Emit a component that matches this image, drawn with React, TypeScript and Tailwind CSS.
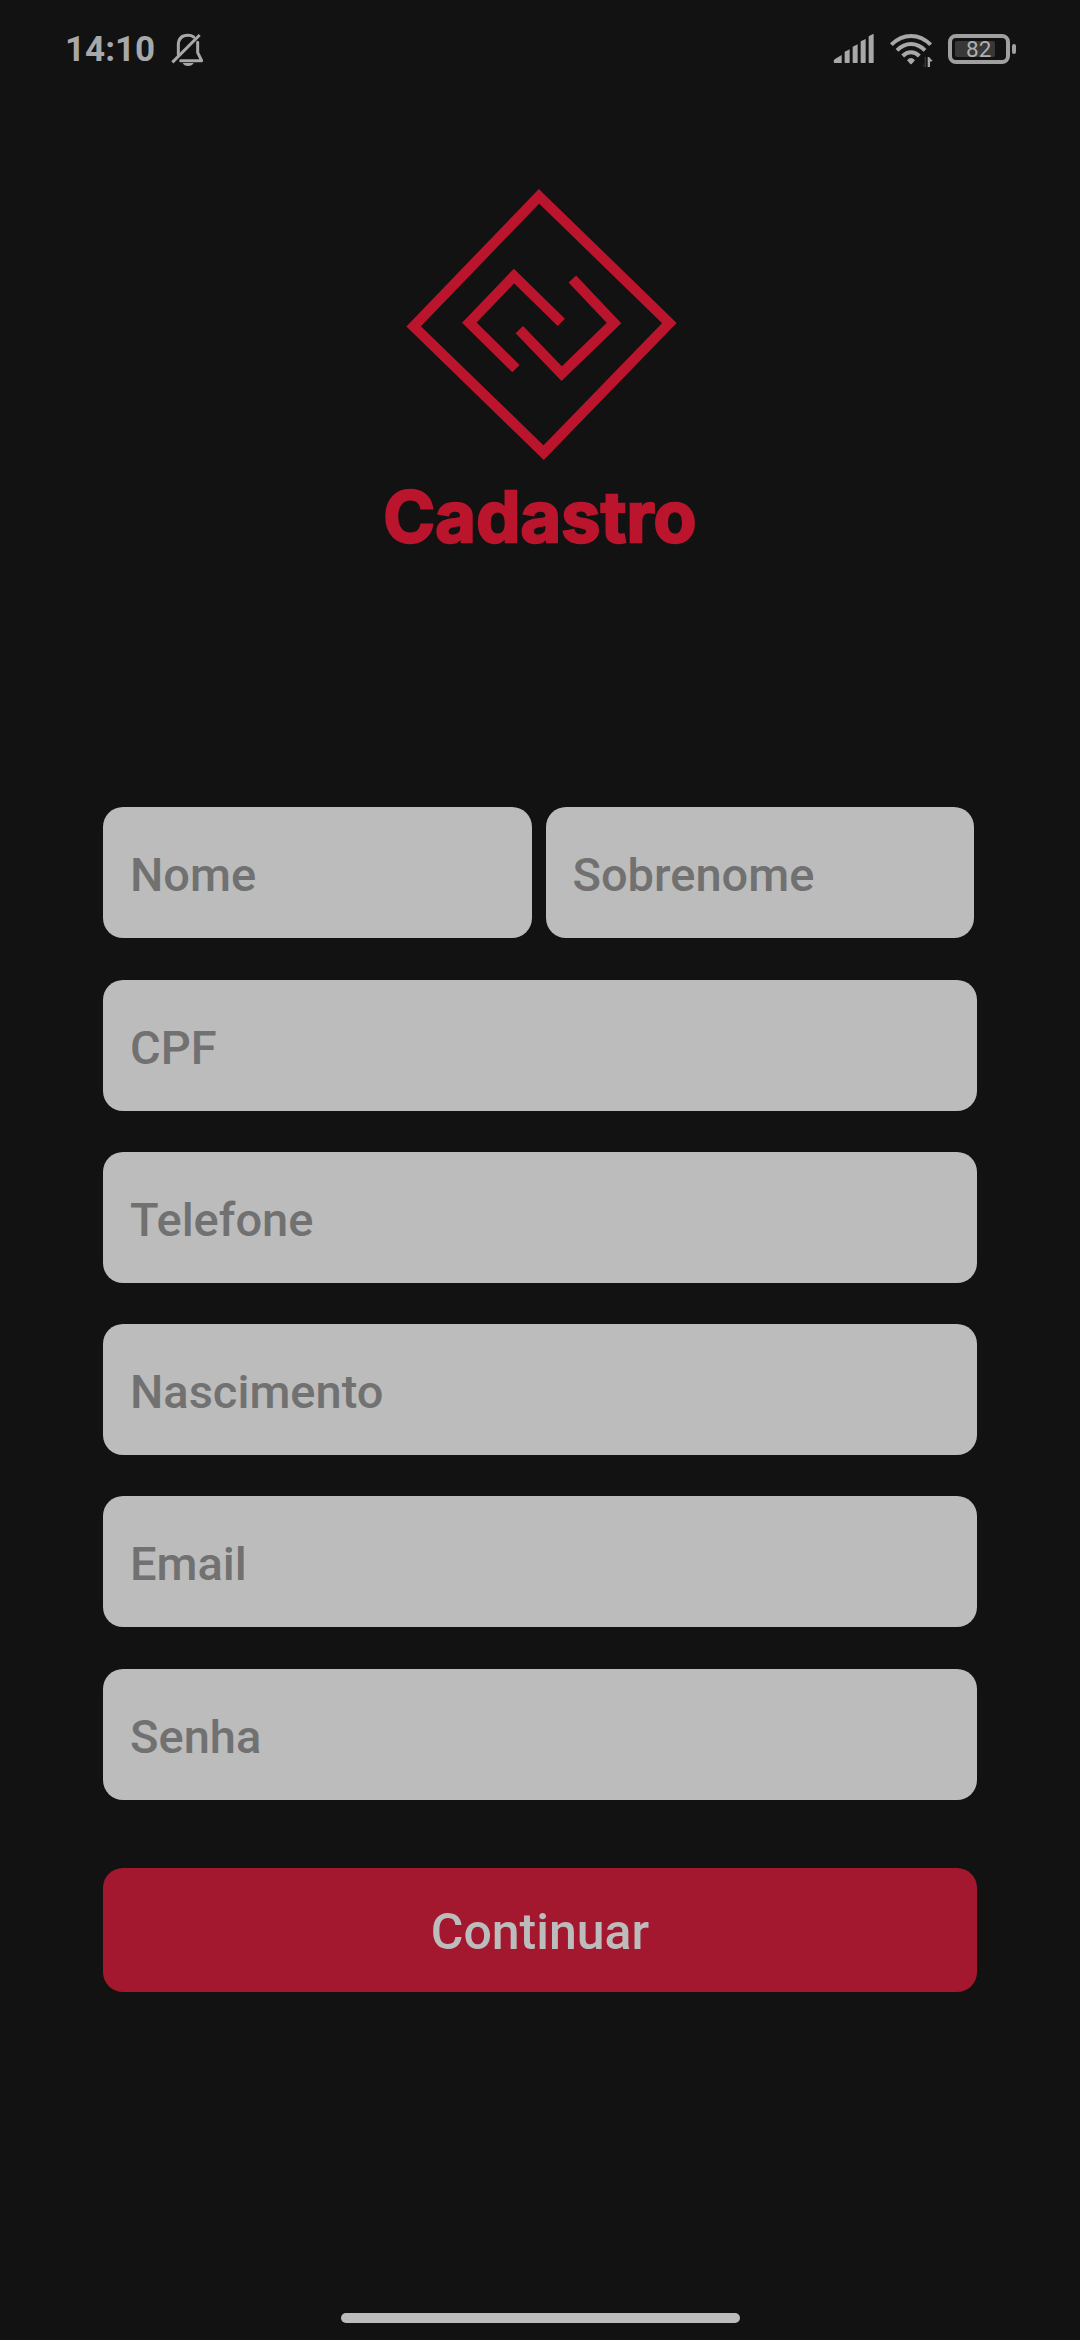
import React from "react";

function BellOff() {
  return (
    <svg className="block h-[60px] w-[50px]" viewBox="360 0 150 180" fill="none" stroke="#a8a8a8" strokeWidth="9">
      <path d="M385 104V76C385 54 398 46 414 46C421 46 427 48 431 51M443 67V98L455 122H392" strokeLinejoin="round" strokeLinecap="round" />
      <path d="M367 127L449 45" strokeLinecap="butt" />
      <path d="M398 129H431C428 135 422 138 414 138S401 135 398 129Z" fill="#a8a8a8" stroke="none" />
    </svg>
  );
}

function Signal() {
  return (
    <svg className="block h-[60px] w-[42px]" viewBox="40 0 126 180" fill="#a8a8a8">
      <path d="M42 124Q42 120 46 117L66 105V129H46Q42 129 42 125Z" />
      <path d="M75 95L90 88V127Q90 129 88 129H77Q75 129 75 127Z" />
      <path d="M99 80L114 73V127Q114 129 112 129H101Q99 129 99 127Z" />
      <path d="M123 64L138 57V127Q138 129 136 129H125Q123 129 123 127Z" />
      <path d="M147 49L160 42Q162 41 162 44V127Q162 129 160 129H149Q147 129 147 127Z" />
    </svg>
  );
}

function Wifi() {
  return (
    <svg className="block h-[60px] w-[46px]" viewBox="207 0 138 180" fill="none" stroke="#a8a8a8" strokeWidth="12">
      <path d="M214 74C249 39 297 39 332 74" />
      <path d="M231 91C257 66 289 66 315 91" />
      <path d="M248 108C263 93 283 93 298 108" />
      <path d="M261 121Q273 107 285 121L275 132Q273 134 271 132Z" fill="#a8a8a8" stroke="none" />
      <path d="M303 127L314 139V111H318V141H313Z" fill="#3a3a3a" stroke="none" />
      <path d="M323 111H327L338 123L330 125V141H323Z" fill="#a8a8a8" stroke="none" />
    </svg>
  );
}

function Battery() {
  return (
    <div className="flex items-center">
      <div className="flex h-[30px] w-[62px] items-center rounded-[8px] border-4 border-[#a0a0a0] pl-[3px]">
        <div className="relative h-4 w-10 rounded-[2px] bg-[#383838]">
          <span className="absolute -top-[3px] left-[11px] text-[22.5px] leading-[22px] text-[#b0b0b0]">82</span>
        </div>
      </div>
      <div className="ml-[2px] h-[10px] w-1 rounded-[2px] bg-[#a0a0a0]" />
    </div>
  );
}

function Logo() {
  return (
    <svg className="block h-[290px] w-[300px]" viewBox="0 0 900 870" fill="none" stroke="#bb152d" strokeWidth="31">
      <path d="M447 49L838 429L461 818L71 439Z" />
      <path d="M514 427L372 288L238 428L378 566" />
      <path d="M547 297L672 429L515 581L388 449" />
    </svg>
  );
}

function Field({ label }: { label: string }) {
  return (
    <label className="flex h-[131px] flex-1 items-center rounded-[20px] bg-[#bcbcbc] px-[27px] pt-[6px] text-[47px] font-medium text-[#717171]">
      <span>{label}</span>
    </label>
  );
}

export default function App() {
  return (
    <div className="flex h-[2340px] w-[1080px] flex-col bg-[#121212] font-[Roboto,sans-serif]">
      <header className="flex h-[100px] items-start pt-5">
        <span className="ml-[65px] w-[105px] pt-[10px] text-[35px] font-bold leading-[40px] text-[#a8a8a8]">14:10</span>
        <BellOff />
        <div className="ml-auto mr-[64px] flex">
          <Signal />
          <div className="ml-[14px]"><Wifi /></div>
          <div className="ml-[13px] mt-[14px]"><Battery /></div>
        </div>
      </header>
      <main className="flex flex-1 flex-col px-[103px]">
        <div className="flex h-[707px] flex-col items-center pt-20">
          <Logo />
          <h1 className="mt-[2px] whitespace-nowrap font-[Inter,sans-serif] text-[70px] font-bold leading-[90px] tracking-[0.2px] text-[#bb152d] [-webkit-text-stroke:2.4px_#bb152d]">Cadastro</h1>
        </div>
        <form className="flex flex-col">
          <div className="mb-[42px] mr-[3px] flex gap-[14px]">
            <Field label="Nome" />
            <Field label="Sobrenome" />
          </div>
          <div className="flex flex-col gap-[41px]">
            <div className="flex"><Field label="CPF" /></div>
            <div className="flex"><Field label="Telefone" /></div>
            <div className="flex"><Field label="Nascimento" /></div>
            <div className="flex"><Field label="Email" /></div>
          </div>
          <div className="mt-[42px] flex"><Field label="Senha" /></div>
          <button type="button" className="mt-[68px] h-[124px] rounded-[20px] bg-[#a3182e] pt-1 text-[50px] font-medium text-[#bcbcbc]">Continuar</button>
        </form>
      </main>
      <footer className="flex h-[27px] justify-center">
        <div className="h-[10px] w-[399px] rounded-full bg-[#bcbcbc]" />
      </footer>
    </div>
  );
}
